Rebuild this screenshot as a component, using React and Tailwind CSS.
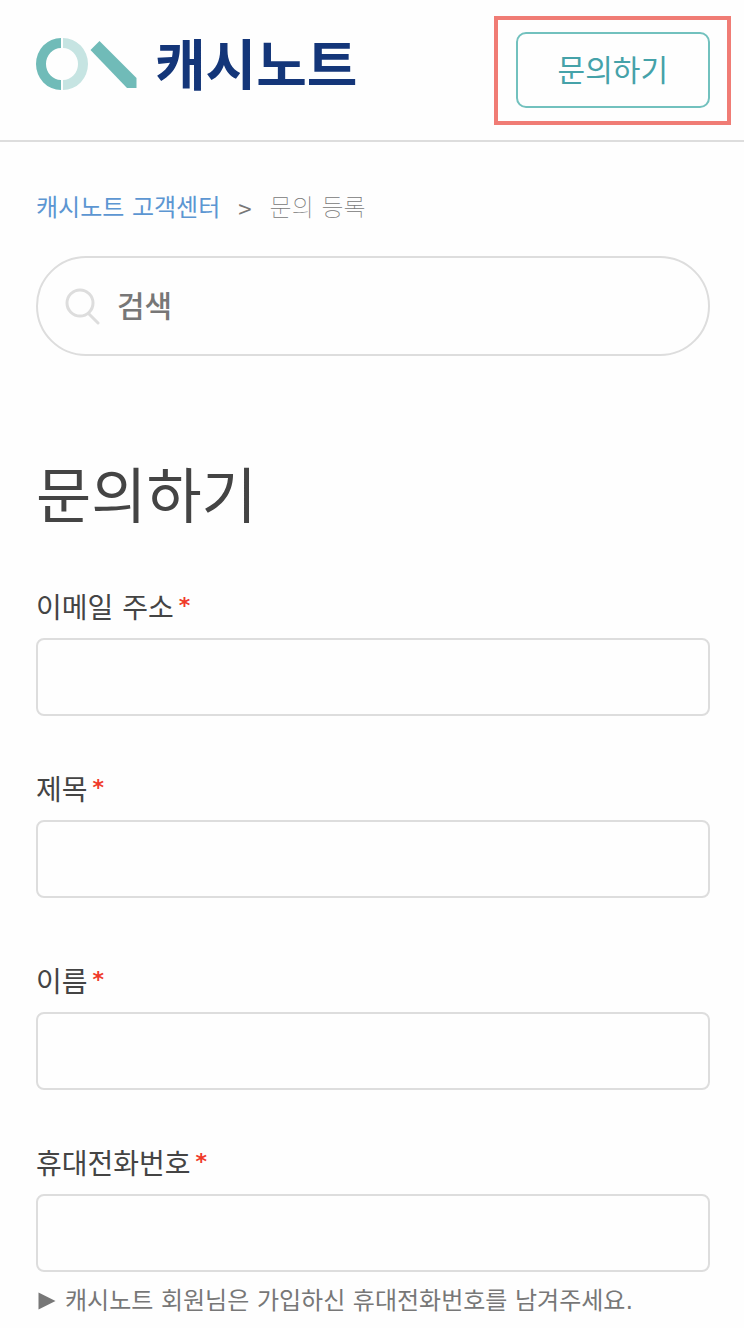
import { useState } from 'react'

const fields = [
  { id: 'email', label: '이메일 주소', type: 'email' },
  { id: 'subject', label: '제목', type: 'text', last: true },
  { id: 'name', label: '이름', type: 'text' },
  { id: 'phone', label: '휴대전화번호', type: 'tel', hint: '캐시노트 회원님은 가입하신 휴대전화번호를 남겨주세요.' },
]

function Logo() {
  return (
    <a href="#" className="mb-3 flex items-center gap-[18px]">
      <svg width="101" height="52" viewBox="0 0 101 52" fill="none" aria-hidden="true">
        <path d="M25 0A25 26 0 0 0 25 52V42A15 16 0 0 1 25 10Z" fill="#70bbb8" />
        <path d="M27 0A25 26 0 0 1 27 52V42A15 16 0 0 0 27 10Z" fill="#c6e4e2" />
        <path d="M63.500 3L100.500 40V50H91L54.500 12Z" fill="#70bbb8" />
      </svg>
      <span className="pt-1 text-[55px] leading-[60px] font-bold text-[#143679]">캐시노트</span>
    </a>
  )
}

function Field({ field, value, onChange }) {
  return (
    <div className={field.last ? 'mb-[62px]' : 'mb-[52px]'}>
      <label htmlFor={field.id} className="flex gap-[5px] text-[28px] leading-[46px] text-[#444]">
        {field.label}
        <span className="text-[22px] leading-10 font-bold text-[#f03a2a]">*</span>
      </label>
      <input
        id={field.id}
        type={field.type}
        value={value}
        onChange={onChange}
        required
        className="mt-[6px] block h-[78px] w-full rounded-lg border-2 border-[#ddd] px-5 text-[28px] outline-none"
      />
      {field.hint && (
        <p className="mt-[10px] flex items-center gap-[9px] text-[24px] leading-[38px] text-[#777]">
          <svg width="20" height="18" viewBox="0 0 20 18" aria-hidden="true">
            <path d="M2.500 0.500L19.500 9L2.500 17.500Z" fill="#777" />
          </svg>
          {field.hint}
        </p>
      )}
    </div>
  )
}

export default function App() {
  const [values, setValues] = useState({})

  return (
    <div className="min-h-screen bg-[#fefefe] font-['DejaVu_Sans','Noto_Sans_CJK_KR',sans-serif]">
      <header className="flex items-center justify-between border-b-2 border-[#ddd] px-9 h-[142px]">
        <Logo />
        <div className="relative -mr-0.5">
          <button className="h-[76px] rounded-[10px] border-2 border-[#72c1be] px-10 pt-[2px] text-[30px] leading-[44px] text-[#45a2a9]">
            문의하기
          </button>
          {/* Resaltado del botón */}
          <div className="pointer-events-none absolute -left-[22px] -right-[21px] -top-4 -bottom-[17px] border-4 border-[#f07c75]" />
        </div>
      </header>

      <main className="px-9 pt-12">
        <nav className="flex items-center gap-[18px] text-[24px] leading-9">
          <a href="#" className="text-[#5c96d2]">캐시노트 고객센터</a>
          <span className="font-['Noto_Sans_CJK_KR',sans-serif] text-[#777]">&gt;</span>
          <span className="font-thin text-[#777]">문의 등록</span>
        </nav>

        <form role="search" className="-mr-0.5 mt-[30px] flex h-[100px] items-center gap-4 rounded-full border-2 border-[#ddd] pl-[27px] pr-8">
          <svg width="36" height="38" viewBox="0 0 36 38" fill="none" stroke="#ddd" strokeWidth="3" strokeLinecap="round" aria-hidden="true">
            <circle cx="15" cy="16" r="13" />
            <path d="M24 27L33 36" />
          </svg>
          <input
            type="search"
            aria-label="검색"
            placeholder="검색"
            className="min-w-0 flex-1 text-[30px] font-medium outline-none placeholder:text-[#777]"
          />
        </form>

        <h1 className="mt-24 text-[60px] leading-[90px] text-[#444]">문의하기</h1>

        <form className="-mr-0.5 mt-11">
          {fields.map((f) => (
            <Field
              key={f.id}
              field={f}
              value={values[f.id] || ''}
              onChange={(e) => setValues({ ...values, [f.id]: e.target.value })}
            />
          ))}
        </form>
      </main>
    </div>
  )
}
